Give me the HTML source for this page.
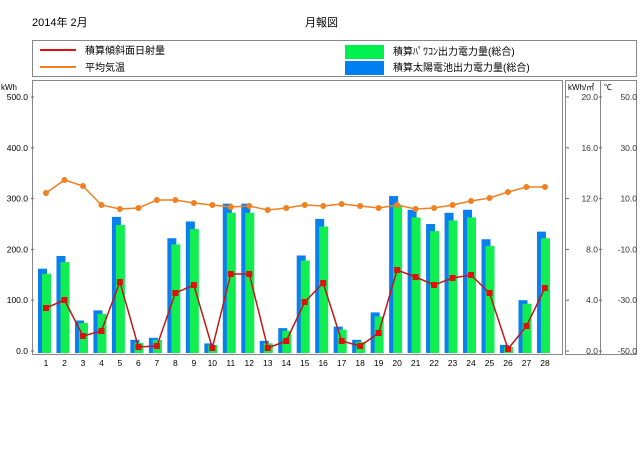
<!DOCTYPE html>
<html><head><meta charset="utf-8"><style>
html,body{margin:0;padding:0;background:#fff;width:640px;height:452px;overflow:hidden}
svg{display:block;font-family:"Liberation Sans","Noto Sans CJK JP",sans-serif}
</style></head><body>
<svg id="s" width="640" height="452" xmlns="http://www.w3.org/2000/svg">
<text x="32" y="26" font-size="11">2014年 2月</text>
<text x="305" y="26" font-size="11">月報図</text>
<rect x="32.5" y="40.5" width="604" height="36" fill="none" stroke="#888" stroke-width="1"/>
<line x1="40" y1="50" x2="76" y2="50" stroke="#e01010" stroke-width="2"/>
<text x="85" y="54" font-size="10">積算傾斜面日射量</text>
<line x1="40" y1="67" x2="76" y2="67" stroke="#f08020" stroke-width="2"/>
<text x="85" y="71" font-size="10">平均気温</text>
<rect x="345" y="45" width="39" height="14" fill="#00f050"/>
<text x="393" y="55" font-size="10">積算ﾊﾟﾜｺﾝ出力電力量(総合)</text>
<rect x="345" y="61" width="39" height="14" fill="#0080f0"/>
<text x="393" y="71" font-size="10">積算太陽電池出力電力量(総合)</text>
<rect x="32.5" y="80.5" width="530" height="274" fill="none" stroke="#888"/>
<rect x="565.5" y="80.5" width="35" height="274" fill="none" stroke="#888"/>
<rect x="600.5" y="80.5" width="36" height="274" fill="none" stroke="#888"/>
<text x="1" y="90" font-size="8">kWh</text>
<text x="568" y="90" font-size="8">kWh/㎡</text>
<text x="604" y="90" font-size="8">℃</text>
<g id="g"></g>
</svg>
<script>
var g=document.getElementById('g'),h='';
var B=[162,187,60,80,264,22,26,222,255,15,290,290,20,45,188,260,48,22,76,305,278,250,272,278,220,12,100,235];
var G=[152,175,55,73,248,16,22,210,240,12,272,272,15,40,178,245,42,18,68,288,263,236,257,263,207,8,93,222];
var R=[308,300,336,331,282,347,346,293,285,348,274,274,348,341,302,283,341,346,333,270,277,285,278,275,293,349,326,288];
var O=[193,180,186,205,209,208,200,200,203,205,207,206,210,208,205,206,204,206,208,205,209,208,205,201,198,192,187,187];
function y(v){return 351-v*0.508}
for(var i=0;i<=5;i++){var yy=y(i*100);
h+='<text x="28" y="'+(yy+3)+'" font-size="8.5" text-anchor="end">'+(i*100)+'.0</text><line x1="31" y1="'+yy+'" x2="34" y2="'+yy+'" stroke="#666"/>';
h+='<text x="598" y="'+(yy+3)+'" font-size="8.5" text-anchor="end" fill="#333">'+(i*4)+'.0</text><line x1="566" y1="'+yy+'" x2="569" y2="'+yy+'" stroke="#666"/><line x1="599" y1="'+yy+'" x2="602" y2="'+yy+'" stroke="#666"/>';
h+='<text x="637" y="'+(yy+3)+'" font-size="8.5" text-anchor="end" fill="#333">'+(-50+i*20)+'.0</text>';}
var pr='',po='';
for(var i=0;i<28;i++){var c=46+i*18.48;
h+='<rect x="'+(c-8)+'" y="'+y(B[i])+'" width="9" height="'+(351-y(B[i])+2)+'" fill="#0a7ff0"/>';
h+='<rect x="'+(c-4)+'" y="'+y(G[i])+'" width="9" height="'+(351-y(G[i])+2)+'" fill="#10ee50"/>';
h+='<text x="'+c+'" y="366" font-size="8.5" text-anchor="middle">'+(i+1)+'</text>';
pr+=c+','+R[i]+' ';po+=c+','+O[i]+' ';}
h+='<polyline points="'+po+'" fill="none" stroke="#f08020" stroke-width="1.5"/><polyline points="'+pr+'" fill="none" stroke="#c01818" stroke-width="1.5"/>';
for(var i=0;i<28;i++){var c=46+i*18.48;
h+='<circle cx="'+c+'" cy="'+O[i]+'" r="3" fill="#f08020"/><rect x="'+(c-3)+'" y="'+(R[i]-3)+'" width="6" height="6" fill="#e01010"/>';}
g.innerHTML=h;
</script>
</body></html>
